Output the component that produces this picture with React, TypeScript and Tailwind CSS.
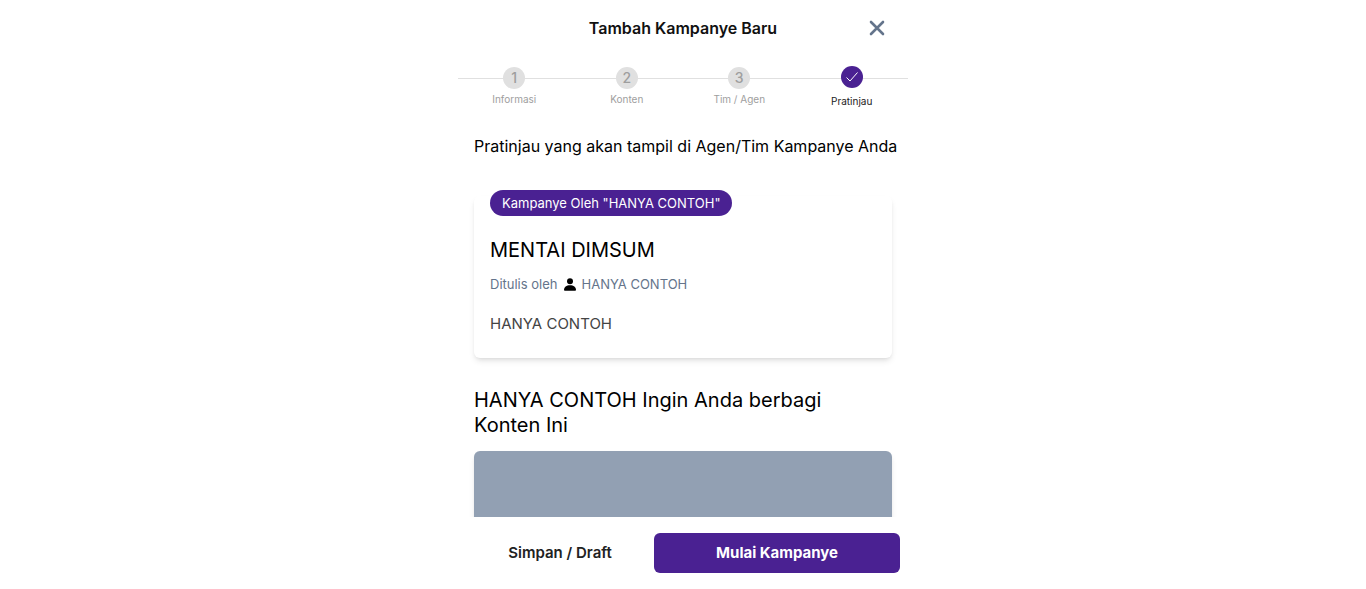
import React from "react";

const steps = ["Informasi", "Konten", "Tim / Agen", "Pratinjau"];
const current = 3;

function Check() {
  return (
    <svg viewBox="0 0 14 14" className="size-3.5" fill="none" stroke="currentColor" strokeWidth="1" aria-hidden="true">
      <path d="M1.5 7.5 5 11 12.5 2.5" />
    </svg>
  );
}

function Person() {
  return (
    <svg viewBox="0 0 12 13" className="mx-1.5 h-[13px] w-3 text-black" fill="currentColor" aria-hidden="true">
      <circle cx="6" cy="3.2" r="3" />
      <path d="M0 12c0-3 2.4-4.7 6-4.7s6 1.7 6 4.7c0 .5-.4.8-.9.8H.9C.4 12.8 0 12.5 0 12Z" />
    </svg>
  );
}

function Stepper() {
  return (
    <ol className="relative grid grid-cols-4 pt-2.5 before:absolute before:inset-x-0 before:top-[22px] before:h-px before:bg-[#e0e0e0]">
      {steps.map((label, i) => {
        const active = i === current;
        return (
          <li key={label} className={active ? "relative flex flex-col items-center gap-1.5 text-[#212121]" : "relative flex flex-col items-center gap-[3px] pt-px text-[#9e9e9e]"}>
            <span className={active ? "flex size-[22px] items-center justify-center rounded-full bg-[#4a2192] text-white" : "flex size-[22px] items-center justify-center rounded-full bg-[#e0e0e0] text-sm font-medium"}>
              {active ? <Check /> : i + 1}
            </span>
            <span className="text-[10px] leading-[14px]">{label}</span>
          </li>
        );
      })}
    </ol>
  );
}

export default function App() {
  return (
    <div className="mx-auto flex h-screen max-w-[450px] flex-col bg-white font-['Inter',sans-serif] text-black">
      <header className="grid h-14 shrink-0 grid-cols-[1fr_auto_1fr] items-center px-4">
        <h1 className="col-start-2 text-base font-semibold text-[#111]">Tambah Kampanye Baru</h1>
        <button type="button" aria-label="Tutup" className="flex size-[30px] items-center justify-center justify-self-end text-[#64748b]">
          <svg viewBox="0 0 16 16" className="size-4" fill="none" stroke="currentColor" strokeWidth="2.6" strokeLinecap="round" aria-hidden="true">
            <path d="M2 2 14 14M14 2 2 14" />
          </svg>
        </button>
      </header>
      <Stepper />
      <main className="min-h-0 flex-1 overflow-hidden px-4 pt-[26px]">
        <p className="text-base whitespace-nowrap">Pratinjau yang akan tampil di Agen/Tim Kampanye Anda</p>
        <article className="relative mt-[38px] rounded-md px-4 pt-10 pb-6 shadow-md">
          <span className="absolute -top-1.5 left-4 rounded-full bg-[#4a2192] px-3 py-[3px] text-[13px] leading-5 whitespace-nowrap text-white">
            Kampanye Oleh "HANYA CONTOH"
          </span>
          <h2 className="text-xl leading-7">MENTAI DIMSUM</h2>
          <div className="mt-2.5 flex items-center text-[13px] leading-5 text-[#64748b]">
            <span>Ditulis oleh</span>
            <Person />
            <span>HANYA CONTOH</span>
          </div>
          <p className="mt-5 text-[15px] leading-5 text-[#444]">HANYA CONTOH</p>
        </article>
        <h2 className="mt-[30px] text-xl leading-[25px]">HANYA CONTOH Ingin Anda berbagi Konten Ini</h2>
        <div className="mt-[13px] h-56 rounded-md bg-[#92a0b3] shadow-md" />
      </main>
      <footer className="grid shrink-0 grid-cols-[7fr_10fr] gap-2 py-4 pr-2 pl-4 text-[15px]">
        <button type="button" className="h-10 rounded-md font-semibold text-[#222]">Simpan / Draft</button>
        <button type="button" className="h-10 rounded-md bg-[#4a2192] font-bold text-white">Mulai Kampanye</button>
      </footer>
    </div>
  );
}
